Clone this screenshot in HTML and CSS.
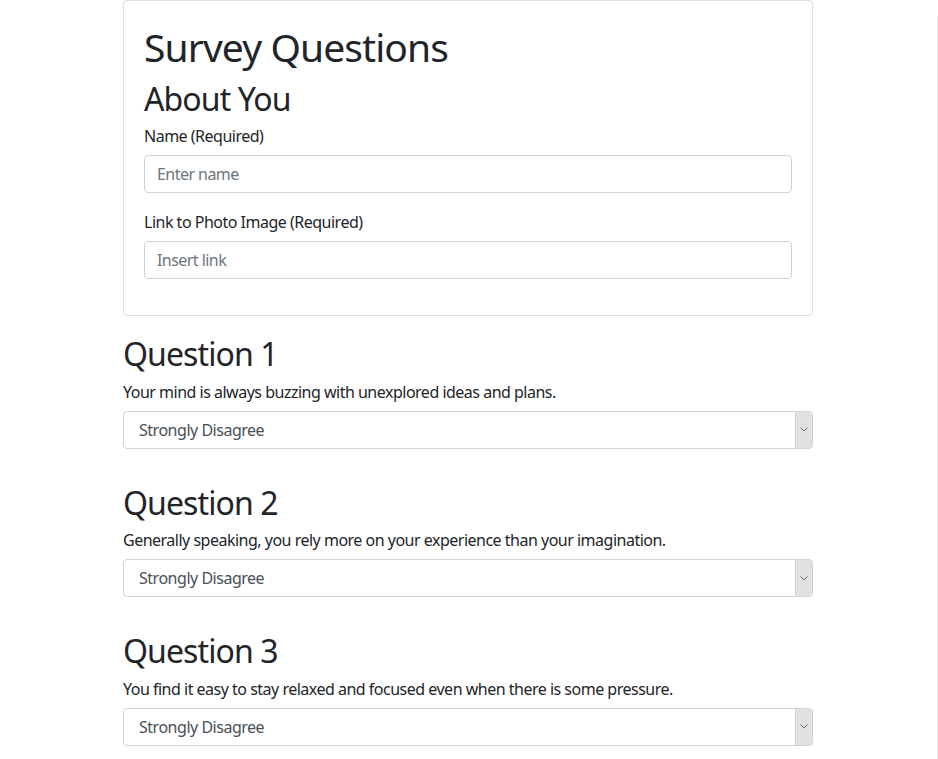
FILE: index.html
```html
<!DOCTYPE html>
<html lang="en">
<head>
<meta charset="utf-8">
<title>Survey</title>
<link rel="stylesheet" href="styles.css">
</head>
<body>
<div class="edge"></div>
<main class="container">
  <section class="card">
    <h1 class="title">Survey Questions</h1>
    <h2 class="subtitle">About You</h2>
    <div class="form-group">
      <label class="label" for="name">Name (Required)</label>
      <input class="input" id="name" type="text" placeholder="Enter name">
    </div>
    <div class="form-group">
      <label class="label" for="photo">Link to Photo Image (Required)</label>
      <input class="input" id="photo" type="text" placeholder="Insert link">
    </div>
  </section>

  <section class="question">
    <h2 class="q-title">Question 1</h2>
    <label class="label" for="q1">Your mind is always buzzing with unexplored ideas and plans.</label>
    <div class="select-wrap">
      <select class="select" id="q1"><option>Strongly Disagree</option></select>
      <span class="arrow"><svg width="8" height="5" viewBox="0 0 8 5"><path d="M0.5 0.5 L4 4 L7.5 0.5" fill="none" stroke="#6b6b6b" stroke-width="1"/></svg></span>
    </div>
  </section>

  <section class="question">
    <h2 class="q-title">Question 2</h2>
    <label class="label" for="q2">Generally speaking, you rely more on your experience than your imagination.</label>
    <div class="select-wrap">
      <select class="select" id="q2"><option>Strongly Disagree</option></select>
      <span class="arrow"><svg width="8" height="5" viewBox="0 0 8 5"><path d="M0.5 0.5 L4 4 L7.5 0.5" fill="none" stroke="#6b6b6b" stroke-width="1"/></svg></span>
    </div>
  </section>

  <section class="question">
    <h2 class="q-title">Question 3</h2>
    <label class="label" for="q3">You find it easy to stay relaxed and focused even when there is some pressure.</label>
    <div class="select-wrap">
      <select class="select" id="q3"><option>Strongly Disagree</option></select>
      <span class="arrow"><svg width="8" height="5" viewBox="0 0 8 5"><path d="M0.5 0.5 L4 4 L7.5 0.5" fill="none" stroke="#6b6b6b" stroke-width="1"/></svg></span>
    </div>
  </section>
</main>
</body>
</html>
```

FILE: styles.css
```css
* { box-sizing: border-box; }

html, body {
  margin: 0;
  padding: 0;
  background: #fff;
}

body {
  font-family: "Noto Sans", "Open Sans", sans-serif;
  font-size: 16px;
  line-height: 1.5;
  color: #212529;
  overflow: hidden;
}

.edge {
  position: fixed;
  top: 16px;
  bottom: 0;
  right: 0;
  width: 1px;
  background: #e6e6e6;
}

.container {
  width: 690px;
  margin-left: 123px;
}

.card {
  border: 1px solid #dfdfdf;
  border-radius: 4px;
  padding: 20px;
  margin-bottom: 16px;
}

.title {
  font-size: 39px;
  font-weight: 400;
  line-height: 44px;
  padding-top: 4px;
  margin: 0 0 8px;
  letter-spacing: -0.9px;
}

.subtitle,
.q-title {
  font-size: 32px;
  font-weight: 400;
  line-height: 33.4px;
  padding-top: 5px;
  margin: 0 0 8px;
  letter-spacing: -0.9px;
}

.form-group {
  margin-bottom: 16px;
}

.label {
  display: block;
  line-height: 22px;
  padding-top: 2px;
  margin-bottom: 8px;
  letter-spacing: -0.5px;
}

.input {
  display: block;
  width: 100%;
  height: 38px;
  padding: 6px 12px;
  font: inherit;
  letter-spacing: -0.55px;
  color: #495057;
  background: #fff;
  border: 1px solid #ced4da;
  border-radius: 4px;
  outline: none;
}

.input::placeholder {
  color: #6c757d;
}

.question {
  margin-bottom: 32px;
}

.select-wrap {
  position: relative;
}

.select {
  display: block;
  width: 100%;
  height: 38px;
  padding: 6px 12px 6px 15px;
  font: inherit;
  letter-spacing: -0.48px;
  color: #495057;
  background: #fff;
  border: 1px solid #ced4da;
  border-radius: 4px;
  appearance: none;
  -webkit-appearance: none;
  outline: none;
}

.arrow {
  position: absolute;
  top: 1px;
  right: 1px;
  bottom: 1px;
  width: 17px;
  background: #e1e1e1;
  border-left: 1px solid #d4d4d4;
  border-radius: 0 3px 3px 0;
  display: flex;
  align-items: center;
  justify-content: center;
  pointer-events: none;
}
```
